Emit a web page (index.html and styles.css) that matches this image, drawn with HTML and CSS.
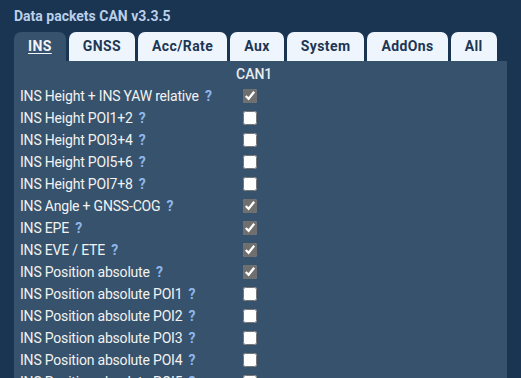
FILE: index.html
```html
<!DOCTYPE html>
<html lang="en">
<head>
    <meta charset="UTF-8">
    <meta name="viewport" content="width=device-width, initial-scale=1.0">
    <title>Data packets CAN</title>
    <link rel="stylesheet" href="styles.css">
</head>
<body>
    <div class="container">
        <h2 class="title">Data packets CAN v3.3.5</h2>

        <!-- Tabs -->
        <div class="tabs">
            <div class="tab active">INS</div>
            <div class="tab">GNSS</div>
            <div class="tab">Acc/Rate</div>
            <div class="tab">Aux</div>
            <div class="tab">System</div>
            <div class="tab">AddOns</div>
            <div class="tab">All</div>
        </div>

        <!-- Packet table -->
        <div class="panel">
            <div class="packets">
                <div class="head-label"></div>
                <div class="head">CAN1</div>

                <div class="label">INS Height + INS YAW relative <span class="help">?</span></div>
                <div class="cell"><input type="checkbox" checked></div>

                <div class="label">INS Height POI1+2 <span class="help">?</span></div>
                <div class="cell"><input type="checkbox"></div>

                <div class="label">INS Height POI3+4 <span class="help">?</span></div>
                <div class="cell"><input type="checkbox"></div>

                <div class="label">INS Height POI5+6 <span class="help">?</span></div>
                <div class="cell"><input type="checkbox"></div>

                <div class="label">INS Height POI7+8 <span class="help">?</span></div>
                <div class="cell"><input type="checkbox"></div>

                <div class="label">INS Angle + GNSS-COG <span class="help">?</span></div>
                <div class="cell"><input type="checkbox" checked></div>

                <div class="label">INS EPE <span class="help">?</span></div>
                <div class="cell"><input type="checkbox" checked></div>

                <div class="label">INS EVE / ETE <span class="help">?</span></div>
                <div class="cell"><input type="checkbox" checked></div>

                <div class="label">INS Position absolute <span class="help">?</span></div>
                <div class="cell"><input type="checkbox" checked></div>

                <div class="label">INS Position absolute POI1 <span class="help">?</span></div>
                <div class="cell"><input type="checkbox"></div>

                <div class="label">INS Position absolute POI2 <span class="help">?</span></div>
                <div class="cell"><input type="checkbox"></div>

                <div class="label">INS Position absolute POI3 <span class="help">?</span></div>
                <div class="cell"><input type="checkbox"></div>

                <div class="label">INS Position absolute POI4 <span class="help">?</span></div>
                <div class="cell"><input type="checkbox"></div>

                <div class="label">INS Position absolute POI5 <span class="help">?</span></div>
                <div class="cell"><input type="checkbox"></div>

                <div class="label">INS Position absolute POI6 <span class="help">?</span></div>
                <div class="cell"><input type="checkbox"></div>
            </div>
        </div>
    </div>
</body>
</html>
```
FILE: styles.css
```css
body {
    font-family: Roboto, "Liberation Sans", sans-serif;
    margin: 0;
    padding: 0;
    background-color: #1a3552;
    overflow: hidden;
}
.container {
    padding: 7px 14px 0;
}
.title {
    margin: 0 0 7px;
    font-size: 14px;
    font-weight: bold;
    line-height: 18px;
    color: #b9d0ea;
}
.tabs {
    display: flex;
    gap: 3px;
}
.tab {
    height: 29px;
    line-height: 29px;
    padding: 0 14px;
    background-color: #eef5fd;
    color: #1d3654;
    font-size: 14px;
    font-weight: bold;
    letter-spacing: 0.4px;
    border-radius: 7px 7px 0 0;
}
.tab.active {
    background-color: #37526c;
    color: #f2f5f9;
    text-decoration: underline;
    text-underline-offset: 2px;
}
.panel {
    background-color: #37526c;
    padding: 2px 0 0 6px;
    min-height: 400px;
}
.packets {
    display: grid;
    grid-template-columns: 216px 28px;
    grid-auto-rows: 22px;
    align-items: center;
}
.head {
    text-align: center;
    color: #e6ebf0;
    font-size: 14px;
    font-weight: 500;
}
.label {
    color: #f2f2f2;
    font-size: 14px;
    letter-spacing: -0.2px;
    white-space: nowrap;
}
.help {
    color: #8fb6e8;
    font-weight: bold;
    margin-left: 3px;
}
.cell {
    display: flex;
    justify-content: center;
}
.cell input {
    margin: 0;
    width: 14px;
    height: 14px;
    accent-color: #6f6f6f;
}
```
